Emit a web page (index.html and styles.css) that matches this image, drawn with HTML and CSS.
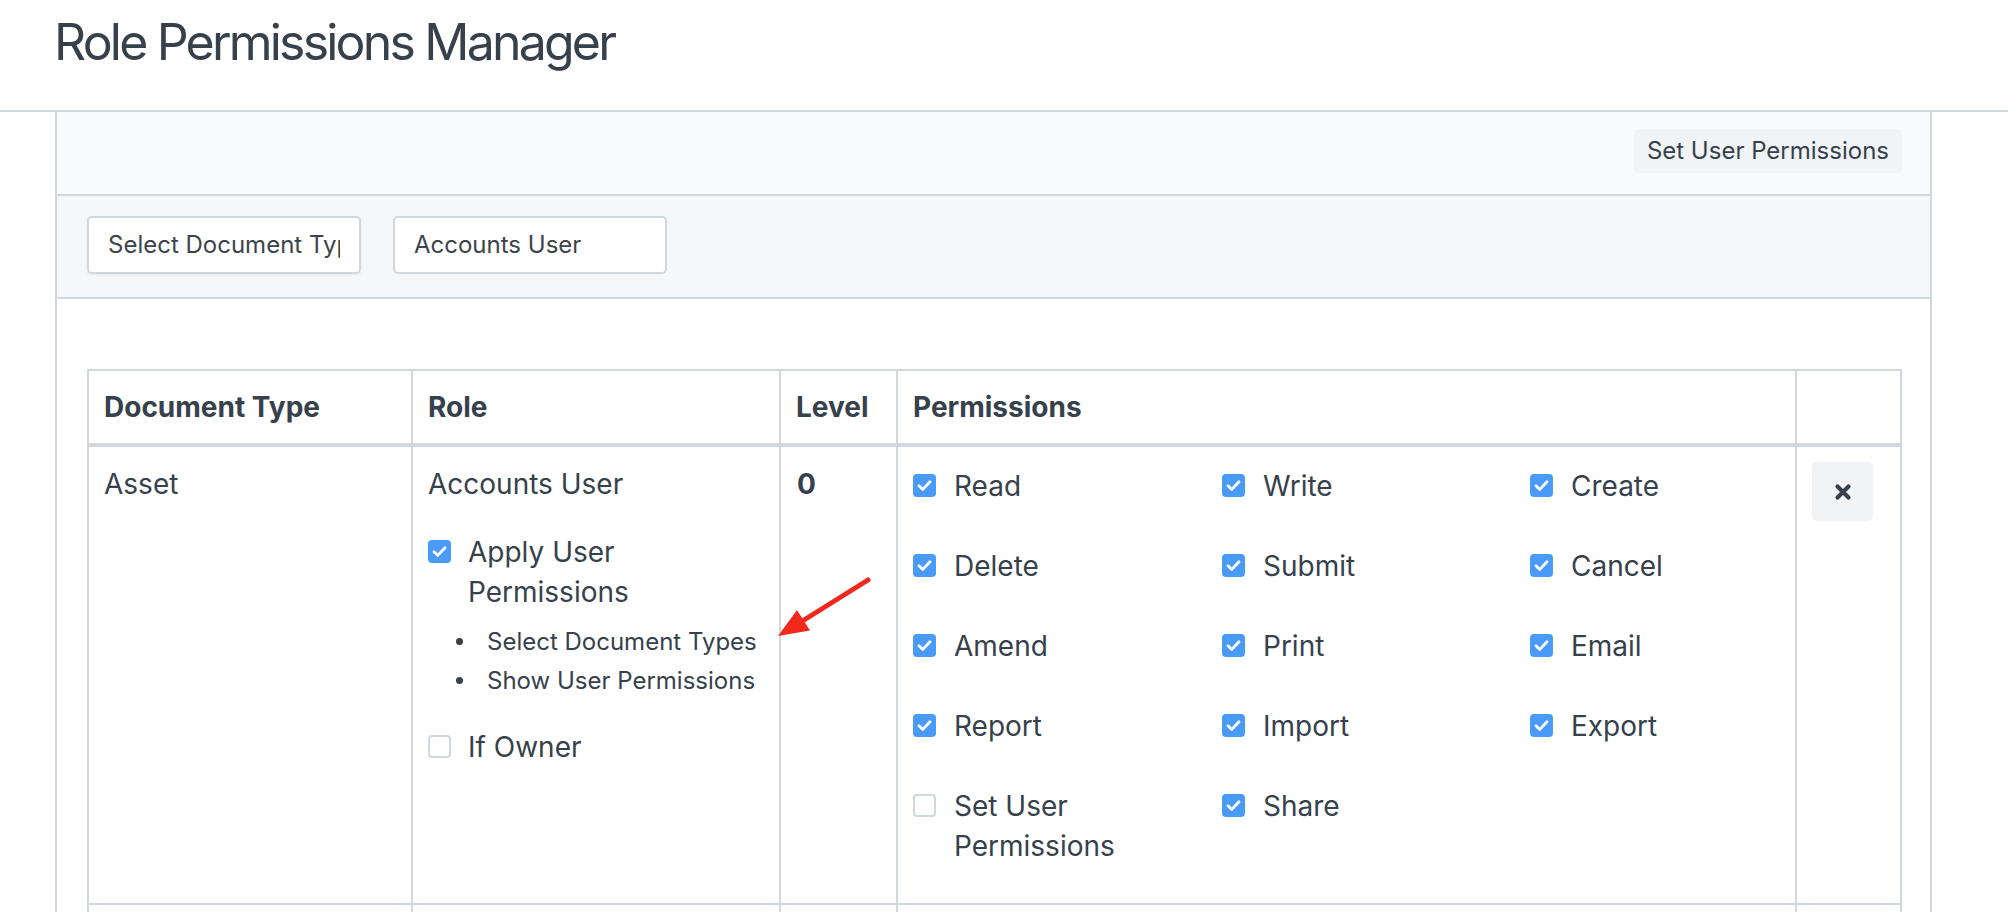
FILE: index.html
```html
<!DOCTYPE html>
<html lang="en">
<head>
<meta charset="utf-8">
<title>Role Permissions Manager</title>
<link rel="stylesheet" href="styles.css">
</head>
<body>
<header class="page-head">
  <h1 class="page-title">Role Permissions Manager</h1>
</header>

<main class="card">
  <div class="card-toolbar">
    <button class="btn" type="button">Set User Permissions</button>
  </div>

  <div class="card-filters">
    <div class="field field-focus"><span class="field-text">Select Document Type</span></div>
    <div class="field"><span class="field-text">Accounts User</span></div>
  </div>

  <div class="card-body">
    <table class="perm-table">
      <colgroup>
        <col class="c-doc"><col class="c-role"><col class="c-level"><col class="c-perm"><col class="c-act">
      </colgroup>
      <thead>
        <tr><th>Document Type</th><th>Role</th><th>Level</th><th>Permissions</th><th></th></tr>
      </thead>
      <tbody>
        <tr>
          <td>Asset</td>
          <td>
            <div class="role-name">Accounts User</div>
            <label class="check apply"><span class="cb on"><svg viewBox="0 0 23 23"><path d="M6 11.8 L9.8 15.4 L17 7.8"/></svg></span><span class="check-label">Apply User Permissions</span></label>
            <ul class="up-links">
              <li>Select Document Types</li>
              <li>Show User Permissions</li>
            </ul>
            <label class="check owner"><span class="cb"></span><span class="check-label">If Owner</span></label>
          </td>
          <td class="level">0</td>
          <td class="perm-cell">
            <div class="perm-grid">
              <label class="check"><span class="cb on"><svg viewBox="0 0 23 23"><path d="M6 11.8 L9.8 15.4 L17 7.8"/></svg></span><span class="check-label">Read</span></label>
              <label class="check"><span class="cb on"><svg viewBox="0 0 23 23"><path d="M6 11.8 L9.8 15.4 L17 7.8"/></svg></span><span class="check-label">Write</span></label>
              <label class="check"><span class="cb on"><svg viewBox="0 0 23 23"><path d="M6 11.8 L9.8 15.4 L17 7.8"/></svg></span><span class="check-label">Create</span></label>
              <label class="check"><span class="cb on"><svg viewBox="0 0 23 23"><path d="M6 11.8 L9.8 15.4 L17 7.8"/></svg></span><span class="check-label">Delete</span></label>
              <label class="check"><span class="cb on"><svg viewBox="0 0 23 23"><path d="M6 11.8 L9.8 15.4 L17 7.8"/></svg></span><span class="check-label">Submit</span></label>
              <label class="check"><span class="cb on"><svg viewBox="0 0 23 23"><path d="M6 11.8 L9.8 15.4 L17 7.8"/></svg></span><span class="check-label">Cancel</span></label>
              <label class="check"><span class="cb on"><svg viewBox="0 0 23 23"><path d="M6 11.8 L9.8 15.4 L17 7.8"/></svg></span><span class="check-label">Amend</span></label>
              <label class="check"><span class="cb on"><svg viewBox="0 0 23 23"><path d="M6 11.8 L9.8 15.4 L17 7.8"/></svg></span><span class="check-label">Print</span></label>
              <label class="check"><span class="cb on"><svg viewBox="0 0 23 23"><path d="M6 11.8 L9.8 15.4 L17 7.8"/></svg></span><span class="check-label">Email</span></label>
              <label class="check"><span class="cb on"><svg viewBox="0 0 23 23"><path d="M6 11.8 L9.8 15.4 L17 7.8"/></svg></span><span class="check-label">Report</span></label>
              <label class="check"><span class="cb on"><svg viewBox="0 0 23 23"><path d="M6 11.8 L9.8 15.4 L17 7.8"/></svg></span><span class="check-label">Import</span></label>
              <label class="check"><span class="cb on"><svg viewBox="0 0 23 23"><path d="M6 11.8 L9.8 15.4 L17 7.8"/></svg></span><span class="check-label">Export</span></label>
              <label class="check"><span class="cb"></span><span class="check-label">Set User Permissions</span></label>
              <label class="check"><span class="cb on"><svg viewBox="0 0 23 23"><path d="M6 11.8 L9.8 15.4 L17 7.8"/></svg></span><span class="check-label">Share</span></label>
            </div>
          </td>
          <td class="act-cell">
            <button class="btn-remove" type="button" aria-label="Remove"><svg viewBox="0 0 18 18"><path d="M3.5 3.5 L14.5 14.5 M14.5 3.5 L3.5 14.5"/></svg></button>
          </td>
        </tr>
        <tr class="next-row"><td></td><td></td><td></td><td></td><td></td></tr>
      </tbody>
    </table>
  </div>
</main>

<svg class="annot-arrow" viewBox="0 0 106 72" width="106" height="72" aria-hidden="true">
  <line x1="98" y1="8" x2="34" y2="48" />
  <polygon points="8,64 40,58.5 27,38" />
</svg>
</body>
</html>
```

FILE: styles.css
```css
* { box-sizing: border-box; }

html, body {
  margin: 0;
  background: #ffffff;
}

body {
  position: relative;
  font-family: Inter, "Noto Sans", "Liberation Sans", sans-serif;
  color: #36414c;
}

/* Page head */
.page-head {
  height: 112px;
  border-bottom: 2px solid #d1d8dd;
  padding: 12px 0 0 54px;
}

.page-title {
  margin: 0;
  font-size: 50px;
  line-height: 60px;
  font-weight: 400;
  letter-spacing: -2.8px;
  color: #36414c;
}

/* Card */
.card {
  margin-left: 55px;
  width: 1877px;
  border-left: 2px solid #d1d8dd;
  border-right: 2px solid #d1d8dd;
}

.card-toolbar {
  height: 84px;
  background: #f9fafb;
  border-bottom: 2px solid #d1d8dd;
  display: flex;
  justify-content: flex-end;
  align-items: flex-start;
  padding: 17px 28px 0 0;
}

.btn {
  height: 44px;
  padding: 0 13px;
  border: none;
  border-radius: 5px;
  background: #f0f4f7;
  color: #36414c;
  font-family: inherit;
  font-size: 24px;
  line-height: 44px;
}

.card-filters {
  height: 103px;
  background: #f5f8fa;
  border-bottom: 2px solid #d1d8dd;
  display: flex;
  gap: 32px;
  padding: 20px 0 0 30px;
}

.field {
  width: 274px;
  height: 58px;
  border: 2px solid #d1d8dd;
  border-radius: 5px;
  background: #ffffff;
  padding: 0 19px;
  font-size: 24px;
  line-height: 54px;
  color: #3d434a;
  display: flex;
}

.field-focus {
  box-shadow: 0 1px 3px rgba(0, 0, 0, 0.08);
}

.field-text {
  display: block;
  overflow: hidden;
  white-space: nowrap;
  flex: 1;
}

.card-body {
  padding: 70px 28px 0 30px;
}

/* Table */
.perm-table {
  width: 100%;
  table-layout: fixed;
  border-collapse: collapse;
  font-size: 28px;
  line-height: 40px;
}

.c-doc { width: 324px; }
.c-role { width: 368px; }
.c-level { width: 117px; }
.c-perm { width: 899px; }

.perm-table th,
.perm-table td {
  border: 2px solid #d1d8dd;
  padding: 16px 15px;
  text-align: left;
  vertical-align: top;
}

.perm-table th {
  font-weight: 700;
  border-bottom-width: 4px;
}

.perm-table td {
  padding-top: 17px;
}

.perm-table td.level {
  font-weight: 700;
  padding-left: 16px;
}

/* Checkboxes */
.check {
  display: flex;
  align-items: flex-start;
  gap: 18px;
}

.cb {
  flex: 0 0 23px;
  width: 23px;
  height: 23px;
  margin-top: 8px;
  border-radius: 4px;
  border: 2px solid #d1d8dd;
  background: #ffffff;
  display: block;
}

.cb.on {
  border: none;
  background: #4a9bf7;
}

.cb svg {
  display: block;
  width: 23px;
  height: 23px;
}

.cb svg path {
  fill: none;
  stroke: #ffffff;
  stroke-width: 2.8;
  stroke-linecap: round;
  stroke-linejoin: round;
}

/* Role cell */
.apply {
  margin-top: 28px;
  gap: 17px;
}

.owner {
  margin-top: 27px;
  gap: 17px;
}

.up-links {
  list-style: none;
  margin: 10px 0 0;
  padding: 0 0 0 59px;
  font-size: 24px;
  line-height: 39px;
}

.up-links li {
  position: relative;
}

.up-links li::before {
  content: "";
  position: absolute;
  left: -31px;
  top: 16px;
  width: 7px;
  height: 7px;
  border-radius: 50%;
  background: #36414c;
}

/* Permissions grid */
.perm-table td.perm-cell {
  padding-top: 19px;
  padding-bottom: 37px;
}

.perm-grid {
  display: grid;
  grid-template-columns: 309px 308px 1fr;
  row-gap: 40px;
}

.perm-grid .check-label {
  max-width: 240px;
}

/* Remove button */
.perm-table td.act-cell {
  padding-top: 15px;
}

.btn-remove {
  width: 61px;
  height: 59px;
  border: none;
  border-radius: 5px;
  background: #f0f4f7;
  display: flex;
  align-items: center;
  justify-content: center;
  padding: 0;
}

.btn-remove svg {
  width: 18px;
  height: 18px;
  display: block;
}

.btn-remove svg path {
  fill: none;
  stroke: #36414c;
  stroke-width: 4.2;
  stroke-linecap: round;
}

.next-row td {
  height: 80px;
}

/* Annotation arrow */
.annot-arrow {
  position: absolute;
  left: 770px;
  top: 572px;
  overflow: visible;
}

.annot-arrow line {
  stroke: #f3281c;
  stroke-width: 5;
  stroke-linecap: round;
}

.annot-arrow polygon {
  fill: #f3281c;
}
```
